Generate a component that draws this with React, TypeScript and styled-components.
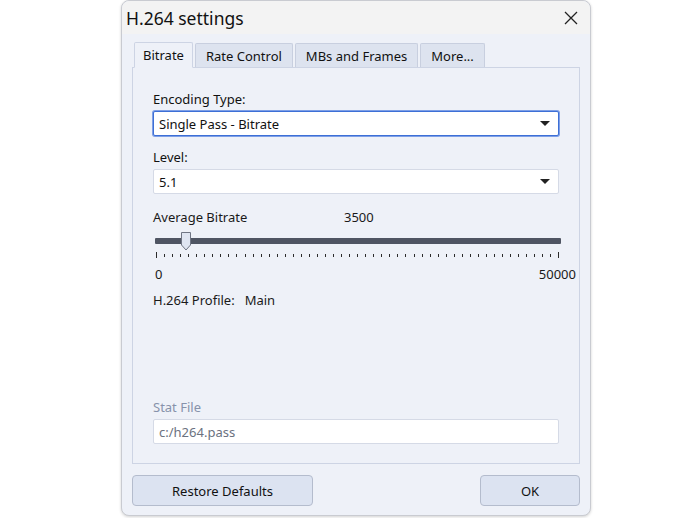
import React from "react";
import styled, { createGlobalStyle } from "styled-components";

const GlobalStyle = createGlobalStyle`
  html, body {
    margin: 0;
    padding: 0;
    background: #ffffff;
  }
  body {
    font-family: "Noto Sans", "Open Sans", sans-serif;
    font-size: 13px;
    color: #1a1a1a;
  }
`;

const Page = styled.div`
  width: 700px;
  height: 518px;
  display: flex;
  justify-content: center;
  align-items: flex-start;
  overflow: hidden;
`;

const Dialog = styled.div`
  width: 470px;
  height: 516px;
  margin-left: 12px;
  box-sizing: border-box;
  background: #eef1f8;
  border: 1px solid #c9cbd1;
  border-radius: 8px;
  box-shadow: 0 1px 3px rgba(0, 0, 0, 0.18);
  display: flex;
  flex-direction: column;
`;

const TitleBar = styled.div`
  height: 33px;
  flex-shrink: 0;
  display: flex;
  align-items: center;
  justify-content: space-between;
  padding: 0 10px 0 4px;
  background: #f3f3f3;
  border-radius: 8px 8px 0 0;
`;

const Title = styled.div`
  font-size: 17.5px;
  color: #111;
`;

const CloseButton = styled.button`
  border: 0;
  background: transparent;
  padding: 0;
  width: 18px;
  height: 18px;
  display: flex;
  align-items: center;
  justify-content: center;
  cursor: pointer;
`;

const Body = styled.div`
  flex: 1;
  display: flex;
  flex-direction: column;
  padding: 7px 10px 9px 10px;
`;

const TabStrip = styled.div`
  display: flex;
  flex-shrink: 0;
  gap: 2px;
  padding-left: 2px;
  height: 26px;
  align-items: flex-end;
`;

const Tab = styled.div<{ $active?: boolean }>`
  height: ${({ $active }) => ($active ? "26px" : "24px")};
  box-sizing: border-box;
  padding: 0 ${({ $active }) => ($active ? "8px" : "10px")};
  display: flex;
  align-items: center;
  background: ${({ $active }) => ($active ? "#eef1f8" : "#dde3ef")};
  border: 1px solid ${({ $active }) => ($active ? "#cdd4e4" : "#c8cfdf")};
  border-bottom: ${({ $active }) => ($active ? "1px solid #eef1f8" : "none")};
  margin-bottom: ${({ $active }) => ($active ? "-1px" : "0")};
  position: relative;
  border-radius: 2px 2px 0 0;
  font-size: 13px;
  color: #111;
`;

const Panel = styled.div`
  height: 397px;
  flex-shrink: 0;
  box-sizing: border-box;
  border: 1px solid #cdd4e4;
  padding: 22px 20px 0 20px;
  display: flex;
  flex-direction: column;
`;

const Label = styled.div<{ $disabled?: boolean }>`
  font-size: 13px;
  line-height: 18px;
  color: ${({ $disabled }) => ($disabled ? "#8792ab" : "#111")};
  margin-bottom: 3px;
`;

const Select = styled.div<{ $focused?: boolean }>`
  height: 25px;
  box-sizing: border-box;
  background: #fff;
  border: 1px solid ${({ $focused }) => ($focused ? "#3d6fd6" : "#d5dae6")};
  box-shadow: ${({ $focused }) => ($focused ? "0 0 0 1px #7e9fe6" : "none")};
  border-radius: 2px;
  display: flex;
  align-items: center;
  justify-content: space-between;
  padding: 0 8px 0 5px;
  font-size: 13px;
  color: #111;
  margin-bottom: 12px;
`;

const Arrow = styled.span`
  width: 0;
  height: 0;
  border-left: 5px solid transparent;
  border-right: 5px solid transparent;
  border-top: 5px solid #222;
`;

const BitrateRow = styled.div`
  display: grid;
  grid-template-columns: 191px auto;
  font-size: 13px;
  line-height: 18px;
  margin-top: 2px;
`;

const Slider = styled.div`
  position: relative;
  height: 36px;
  margin-top: 3px;
  width: 408px;
`;

const Track = styled.div`
  position: absolute;
  left: 2px;
  right: 0;
  top: 9px;
  height: 6px;
  background: #4f5563;
  border-radius: 1px;
`;

const Thumb = styled.svg`
  position: absolute;
  left: 27px;
  top: 3px;
`;

const Ticks = styled.div`
  position: absolute;
  left: 3px;
  right: 1px;
  top: 23px;
  display: flex;
  justify-content: space-between;
  align-items: flex-start;
`;

const Tick = styled.span<{ $long?: boolean }>`
  width: 1px;
  height: ${({ $long }) => ($long ? "6px" : "3px")};
  margin-top: ${({ $long }) => ($long ? "0" : "2px")};
  background: #2b2b2b;
`;

const ScaleRow = styled.div`
  display: flex;
  justify-content: space-between;
  width: 421px;
  padding-left: 2px;
  font-size: 13px;
  line-height: 18px;
`;

const ProfileRow = styled.div`
  font-size: 13px;
  line-height: 18px;
  margin-top: 8px;
  display: flex;
  gap: 10px;
`;

const Spacer = styled.div`
  flex: 1;
`;

const TextField = styled.div`
  height: 25px;
  box-sizing: border-box;
  background: #fff;
  border: 1px solid #d5dae6;
  border-radius: 2px;
  display: flex;
  align-items: center;
  padding: 0 5px;
  font-size: 13px;
  color: #6b7280;
  margin-bottom: 19px;
`;

const Footer = styled.div`
  display: flex;
  flex-shrink: 0;
  justify-content: space-between;
  margin-top: 11px;
`;

const Button = styled.button<{ $width: number }>`
  width: ${({ $width }) => $width}px;
  height: 31px;
  background: #dce3f1;
  border: 1px solid #b4bccd;
  border-radius: 4px;
  font-family: "Noto Sans", "Open Sans", sans-serif;
  font-size: 13px;
  color: #111;
  padding: 0;
`;

const TICK_COUNT = 51;

export default function App() {
  const tabs = ["Bitrate", "Rate Control", "MBs and Frames", "More..."];

  return (
    <Page>
      <GlobalStyle />
      <Dialog>
        <TitleBar>
          <Title>H.264 settings</Title>
          <CloseButton aria-label="Close">
            <svg width="14" height="14" viewBox="0 0 14 14">
              <path d="M1 1 L13 13 M13 1 L1 13" stroke="#222" strokeWidth="1.3" />
            </svg>
          </CloseButton>
        </TitleBar>
        <Body>
          <TabStrip>
            {tabs.map((t, i) => (
              <Tab key={t} $active={i === 0}>
                {t}
              </Tab>
            ))}
          </TabStrip>
          <Panel>
            <Label>Encoding Type:</Label>
            <Select $focused>
              Single Pass - Bitrate
              <Arrow />
            </Select>
            <Label>Level:</Label>
            <Select>
              5.1
              <Arrow />
            </Select>
            <BitrateRow>
              <span>Average Bitrate</span>
              <span>3500</span>
            </BitrateRow>
            <Slider>
              <Track />
              <Ticks>
                {Array.from({ length: TICK_COUNT }, (_, i) => (
                  <Tick key={i} $long={i === 0 || i === TICK_COUNT - 1} />
                ))}
              </Ticks>
              <Thumb width="12" height="19" viewBox="0 0 12 19">
                <path
                  d="M1.5 0.5 H10.5 V13 L6 18 L1.5 13 Z"
                  fill="#dfe5f2"
                  stroke="#6f7584"
                  strokeWidth="1"
                />
              </Thumb>
            </Slider>
            <ScaleRow>
              <span>0</span>
              <span>50000</span>
            </ScaleRow>
            <ProfileRow>
              <span>H.264 Profile:</span>
              <span>Main</span>
            </ProfileRow>
            <Spacer />
            <Label $disabled>Stat File</Label>
            <TextField>c:/h264.pass</TextField>
          </Panel>
          <Footer>
            <Button $width={181}>Restore Defaults</Button>
            <Button $width={100}>OK</Button>
          </Footer>
        </Body>
      </Dialog>
    </Page>
  );
}
